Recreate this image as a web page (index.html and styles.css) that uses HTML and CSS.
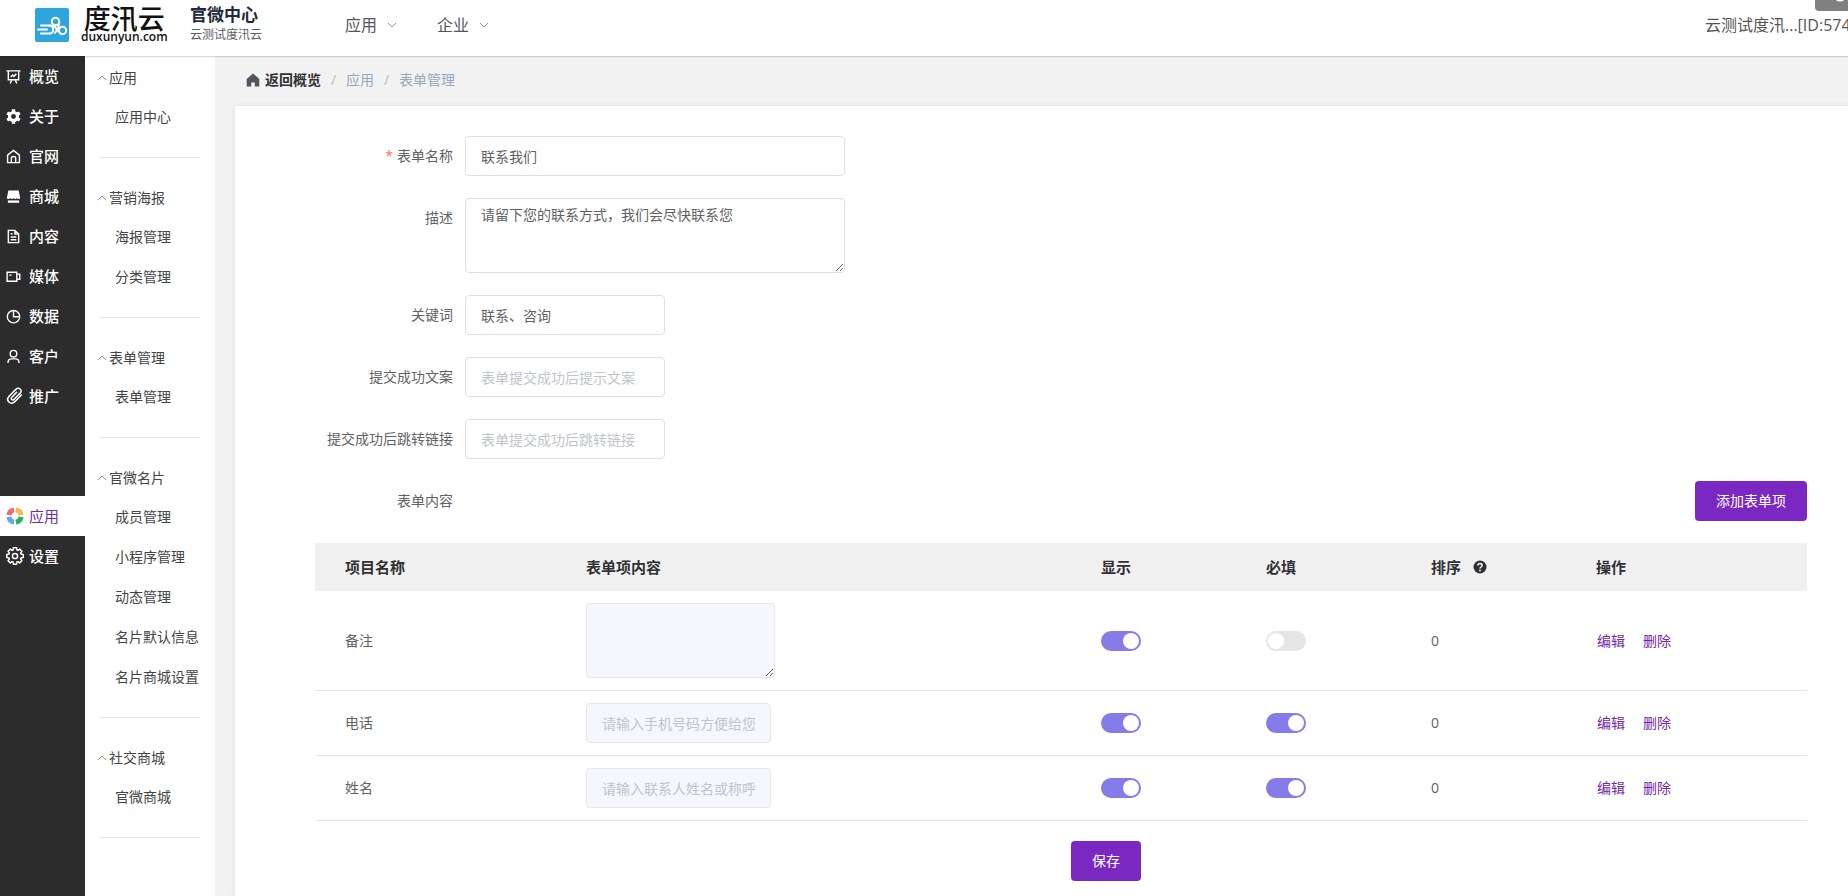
FILE: index.html
```html
<!DOCTYPE html>
<html lang="zh-CN">
<head>
<meta charset="utf-8">
<meta name="viewport" content="width=device-width, initial-scale=1">
<title>表单管理 - 官微中心</title>
<link rel="stylesheet" href="styles.css">
</head>
<body>
<div class="app">
  <header class="topbar">
    <a class="brand" href="#">
      <svg class="brand-mark" viewBox="0 0 34 34" aria-hidden="true">
        <rect width="34" height="34" rx="2" fill="#2fa5dd"/>
        <g fill="none" stroke="#fff" stroke-width="2" stroke-linecap="round" stroke-linejoin="round">
          <path d="M6 17.500h8.500M3 21.500h9M6 25.500h9"/>
          <path d="M14.500 17.500c4.500 0 5 8 .5 8"/>
          <circle cx="20.500" cy="13.500" r="3.700"/>
          <circle cx="27.500" cy="22.500" r="3.700"/>
          <path d="M24.200 14.500c0 4-1.700 7-4.200 10.500M17.500 16l7.500 9"/>
        </g>
      </svg>
      <span class="brand-text">
        <span class="brand-name">度汛云</span>
        <span class="brand-domain">duxunyun.com</span>
      </span>
    </a>
    <div class="site">
      <strong class="site-title">官微中心</strong>
      <span class="site-sub">云测试度汛云</span>
    </div>
    <nav class="topnav" aria-label="主导航">
      <button class="topnav-item" type="button">应用<svg class="caret" viewBox="0 0 10 6" aria-hidden="true"><path d="M1 1l4 4 4-4"/></svg></button>
      <button class="topnav-item" type="button">企业<svg class="caret" viewBox="0 0 10 6" aria-hidden="true"><path d="M1 1l4 4 4-4"/></svg></button>
    </nav>
    <div class="account">云测试度汛...[ID:574]</div>
    <div class="corner-tab" aria-hidden="true"></div>
  </header>

  <nav class="rail" aria-label="功能">
    <a class="rail-item" href="#"><span class="rail-icon"><svg viewBox="0 0 16 16"><path d="M.5 2h15M2.500 2v9.500h11V2M6 12l-1.500 3.500M10 12l1.500 3.500M5 8.500l2-2 1.500 1.500 2.500-3"/></svg></span>概览</a>
    <a class="rail-item" href="#"><span class="rail-icon"><svg viewBox="0 0 16 16"><circle cx="8" cy="8" r="4.300" stroke-width="3.400"/><path d="M8 .3v3M8 12.700v3M1.300 4.150l2.600 1.500M12.100 10.350l2.600 1.500M1.300 11.850l2.600-1.500M12.100 5.650l2.600-1.500" stroke-width="3.600"/></svg></span>关于</a>
    <a class="rail-item" href="#"><span class="rail-icon"><svg viewBox="0 0 16 16"><path d="M1.700 6.500L8 1.500l6.300 5V14.500H1.700zM5.700 14.500V9.500Q5.700 8 8 8t2.300 1.500v5"/></svg></span>官网</a>
    <a class="rail-item" href="#"><span class="rail-icon"><svg viewBox="0 0 16 16"><path d="M2.500 1.500h11L15 9c0 2-2.300 2-3.500.9-1.200 1.100-2.300 1.100-3.500 0-1.200 1.100-2.300 1.100-3.500 0C3.300 11 1 11 1 9z" fill="currentColor" stroke="none"/><path d="M2 12.200h12v2.500H2z" fill="currentColor" stroke="none"/></svg></span>商城</a>
    <a class="rail-item" href="#"><span class="rail-icon"><svg viewBox="0 0 16 16"><path d="M2.500 1.500h7l4 4v9h-11zM9.500 1.500v4h4M5 5h2M5 8.500h6M5 11.500h6"/></svg></span>内容</a>
    <a class="rail-item" href="#"><span class="rail-icon"><svg viewBox="0 0 16 16"><path d="M1.200 3.500h10.300v9.500H1.200zM11.500 5.500h3.200v5.500h-3.200M3.500 6.500h2.500"/></svg></span>媒体</a>
    <a class="rail-item" href="#"><span class="rail-icon"><svg viewBox="0 0 16 16"><circle cx="8" cy="8.200" r="6.600"/><path d="M8 1.600v6.600h6.600"/></svg></span>数据</a>
    <a class="rail-item" href="#"><span class="rail-icon"><svg viewBox="0 0 16 16"><circle cx="8" cy="5" r="3.500"/><path d="M2.200 15v-1c0-2.500 1.800-3.500 3.800-3.500h4c2 0 3.800 1 3.800 3.500v1"/></svg></span>客户</a>
    <a class="rail-item" href="#"><span class="rail-icon"><svg class="rail-svg-lg" viewBox="0 0 18 18"><path d="M15.800 7.500l-6.700 6.900c-4.500 4.300-10-.9-5.800-5.400l6.500-6.600c3.200-3 7 .8 4.100 4L8 12.400c-1.700 1.600-3.800-.5-2.200-2.200l5.200-5.300"/></svg></span>推广</a>
    <a class="rail-item rail-item-active" href="#" aria-current="page"><span class="rail-icon"><svg class="rail-svg-lg" viewBox="0 0 18 18"><g stroke-width="5" fill="none"><path d="M2.900 8.100A6.200 6.200 0 0 1 8.100 2.900" stroke="#ee6b70"/><path d="M9.900 2.900A6.200 6.200 0 0 1 15.100 8.100" stroke="#f8b94b"/><path d="M15.100 9.900A6.200 6.200 0 0 1 9.900 15.100" stroke="#27b35a"/><path d="M8.100 15.100A6.200 6.200 0 0 1 2.900 9.900" stroke="#5ea7f5"/></g></svg></span>应用</a>
    <a class="rail-item" href="#"><span class="rail-icon"><svg class="rail-svg-lg" viewBox="0 0 18 18"><path stroke-linejoin="round" d="M7.100 3L7.400.8h3.200l.3 2.200 1 .4 1.800-1.300 2.200 2.200-1.300 1.800.4 1 2.200.3v3.200l-2.200.3-.4 1 1.300 1.800-2.200 2.200-1.800-1.300-1 .4-.3 2.200H7.400L7.100 15l-1-.4-1.800 1.300-2.200-2.200 1.300-1.800-.4-1-2.200-.3V7.400L3 7.100l.4-1L2.100 4.300l2.200-2.200 1.800 1.300z"/><circle cx="9" cy="9" r="2.600"/></svg></span>设置</a>
  </nav>

  <nav class="submenu" aria-label="应用菜单">
    <section class="group">
      <button class="group-title" type="button"><svg class="group-caret" viewBox="0 0 10 6" aria-hidden="true"><path d="M1 5l4-4 4 4"/></svg>应用</button>
      <a class="group-link" href="#">应用中心</a>
    </section>
    <section class="group">
      <button class="group-title" type="button"><svg class="group-caret" viewBox="0 0 10 6" aria-hidden="true"><path d="M1 5l4-4 4 4"/></svg>营销海报</button>
      <a class="group-link" href="#">海报管理</a>
      <a class="group-link" href="#">分类管理</a>
    </section>
    <section class="group">
      <button class="group-title" type="button"><svg class="group-caret" viewBox="0 0 10 6" aria-hidden="true"><path d="M1 5l4-4 4 4"/></svg>表单管理</button>
      <a class="group-link" href="#">表单管理</a>
    </section>
    <section class="group">
      <button class="group-title" type="button"><svg class="group-caret" viewBox="0 0 10 6" aria-hidden="true"><path d="M1 5l4-4 4 4"/></svg>官微名片</button>
      <a class="group-link" href="#">成员管理</a>
      <a class="group-link" href="#">小程序管理</a>
      <a class="group-link" href="#">动态管理</a>
      <a class="group-link" href="#">名片默认信息</a>
      <a class="group-link" href="#">名片商城设置</a>
    </section>
    <section class="group">
      <button class="group-title" type="button"><svg class="group-caret" viewBox="0 0 10 6" aria-hidden="true"><path d="M1 5l4-4 4 4"/></svg>社交商城</button>
      <a class="group-link" href="#">官微商城</a>
    </section>
  </nav>

  <main class="main">
    <nav class="crumbs" aria-label="面包屑">
      <a class="crumb crumb-home" href="#"><svg class="home-icon" viewBox="0 0 14 14" aria-hidden="true"><path d="M7 .5L13.300 6v7.500H8.800V9.500H5.200v4H.7V6z" fill="#51555c"/></svg>返回概览</a>
      <span class="crumb-sep">/</span>
      <a class="crumb" href="#">应用</a>
      <span class="crumb-sep">/</span>
      <a class="crumb" href="#">表单管理</a>
    </nav>
    <form class="card">
      <div class="field">
        <label class="label label-required" for="f-name">表单名称</label>
        <input class="control control-wide" id="f-name" type="text" value="联系我们">
      </div>
      <div class="field">
        <label class="label" for="f-desc">描述</label>
        <textarea class="control control-wide control-area" id="f-desc">请留下您的联系方式，我们会尽快联系您</textarea>
      </div>
      <div class="field">
        <label class="label" for="f-keys">关键词</label>
        <input class="control" id="f-keys" type="text" value="联系、咨询">
      </div>
      <div class="field">
        <label class="label" for="f-ok">提交成功文案</label>
        <input class="control" id="f-ok" type="text" placeholder="表单提交成功后提示文案">
      </div>
      <div class="field">
        <label class="label" for="f-url">提交成功后跳转链接</label>
        <input class="control" id="f-url" type="text" placeholder="表单提交成功后跳转链接">
      </div>
      <div class="field">
        <span class="label">表单内容</span>
        <button class="btn btn-add" type="button">添加表单项</button>
      </div>

      <table class="items">
        <colgroup>
          <col class="col-side"><col><col class="col-flag"><col class="col-flag"><col class="col-flag"><col class="col-side">
        </colgroup>
        <thead>
          <tr>
            <th scope="col">项目名称</th>
            <th scope="col">表单项内容</th>
            <th scope="col">显示</th>
            <th scope="col">必填</th>
            <th scope="col"><span class="sort-head">排序<svg class="help" viewBox="0 0 14 14" role="img" aria-label="帮助"><circle cx="7" cy="7" r="6.500" fill="#2d2f33"/><path d="M4.900 5.500c0-2.600 4.200-2.600 4.200 0 0 1.500-2.100 1.500-2.100 3" fill="none" stroke="#fff" stroke-width="1.500"/><circle cx="7" cy="10.500" r=".9" fill="#fff"/></svg></span></th>
            <th scope="col">操作</th>
          </tr>
        </thead>
        <tbody>
          <tr>
            <td>备注</td>
            <td><textarea class="control control-area control-preview-area" aria-label="备注" readonly></textarea></td>
            <td><input class="switch" type="checkbox" aria-label="备注 显示" checked></td>
            <td><input class="switch" type="checkbox" aria-label="备注 必填"></td>
            <td>0</td>
            <td><div class="ops"><button class="link" type="button">编辑</button><button class="link" type="button">删除</button></div></td>
          </tr>
          <tr>
            <td>电话</td>
            <td><input class="control control-preview" type="text" aria-label="电话" placeholder="请输入手机号码方便给您" readonly></td>
            <td><input class="switch" type="checkbox" aria-label="电话 显示" checked></td>
            <td><input class="switch" type="checkbox" aria-label="电话 必填" checked></td>
            <td>0</td>
            <td><div class="ops"><button class="link" type="button">编辑</button><button class="link" type="button">删除</button></div></td>
          </tr>
          <tr>
            <td>姓名</td>
            <td><input class="control control-preview" type="text" aria-label="姓名" placeholder="请输入联系人姓名或称呼" readonly></td>
            <td><input class="switch" type="checkbox" aria-label="姓名 显示" checked></td>
            <td><input class="switch" type="checkbox" aria-label="姓名 必填" checked></td>
            <td>0</td>
            <td><div class="ops"><button class="link" type="button">编辑</button><button class="link" type="button">删除</button></div></td>
          </tr>
        </tbody>
      </table>

      <div class="actions"><button class="btn" type="button">保存</button></div>
    </form>
  </main>
</div>
</body>
</html>
```
FILE: styles.css
```css
*,
*::before,
*::after {
  box-sizing: border-box;
}

body {
  margin: 0;
  overflow: hidden;
  font-family: "Open Sans", "Noto Sans CJK SC", sans-serif;
  font-size: 14px;
  line-height: 20px;
  color: #606266;
  background: #f2f2f2;
}

a {
  color: inherit;
  text-decoration: none;
}

button,
input,
textarea {
  font: inherit;
  color: inherit;
}

button {
  padding: 0;
  border: 0;
  background: none;
  cursor: pointer;
}

.app {
  display: grid;
  grid-template-columns: 85px 130px minmax(0, 1fr);
  grid-template-rows: 56px 1fr;
  height: 100vh;
}

/* Top bar */
.topbar {
  position: relative;
  z-index: 1;
  grid-column: 1 / -1;
  display: flex;
  align-items: center;
  padding-left: 35px;
  padding-bottom: 6px;
  background: #fff;
  box-shadow: 0 1px 1px rgba(0, 0, 0, 0.14);
}

.brand {
  display: flex;
  align-items: center;
  gap: 12px;
  width: 155px;
  color: #111;
}

.brand-mark {
  width: 34px;
  height: 34px;
}

.brand-text {
  display: flex;
  flex-direction: column;
  align-items: center;
}

.brand-name {
  font-size: 27px;
  font-weight: 500;
  line-height: 24px;
}

.brand-domain {
  font-size: 12px;
  font-weight: 600;
  line-height: 12px;
}

.site {
  display: flex;
  flex-direction: column;
  width: 155px;
}

.site-title {
  font-size: 17px;
  line-height: 20px;
  color: #1f2a3c;
}

.site-sub {
  font-size: 12px;
  line-height: 20px;
  color: #5c5c66;
}

.topnav {
  display: flex;
  gap: 40px;
}

.topnav-item {
  display: flex;
  align-items: center;
  gap: 10px;
  font-size: 16px;
  color: #55555e;
}

.caret {
  width: 10px;
  height: 6px;
  fill: none;
  stroke: #909399;
}

.account {
  flex: none;
  width: 143px;
  margin-left: auto;
  overflow: hidden;
  font-size: 16px;
  white-space: nowrap;
  color: #555;
}

.corner-tab {
  position: absolute;
  top: 0;
  right: 0;
  width: 33px;
  height: 11px;
  border-bottom-left-radius: 4px;
  background: radial-gradient(circle at 25px -5px, #fff 6px, #808080 7px);
}

/* Dark rail */
.rail {
  background: #2c2c2c;
}

.rail-item {
  display: flex;
  align-items: center;
  gap: 5px;
  height: 40px;
  padding-left: 6px;
  font-size: 15px;
  font-weight: 500;
  color: #fff;
}

.rail-item-active {
  margin-top: 80px;
  font-weight: 400;
  color: #6b2fa5;
  background: #fff;
}

.rail-icon {
  display: flex;
  width: 18px;
}

.rail-icon svg {
  width: 15px;
  height: 15px;
  fill: none;
  stroke: currentColor;
  stroke-width: 1.5;
}

.rail-icon .rail-svg-lg {
  width: 18px;
  height: 18px;
}

/* Second-level menu */
.submenu {
  padding-top: 1px;
  background: #fff;
  color: #444;
}

.group {
  padding-bottom: 40px;
  background: linear-gradient(#e6e6e6, #e6e6e6) 15px calc(100% - 19px) / 100px 1px no-repeat;
}

.group-title {
  display: flex;
  align-items: center;
  gap: 2px;
  width: 100%;
  height: 40px;
  padding: 2px 0 0 12px;
}

.group-caret {
  width: 10px;
  height: 6px;
  fill: none;
  stroke: #909399;
}

.group-link {
  display: flex;
  align-items: center;
  height: 40px;
  padding-left: 30px;
  white-space: nowrap;
}

/* Content */
.main {
  display: flex;
  flex-direction: column;
  padding-left: 20px;
}

.crumbs {
  display: flex;
  align-items: center;
  height: 50px;
  padding: 0 0 2px 11px;
  color: #97a8be;
}

.crumb-home {
  display: flex;
  align-items: center;
  gap: 5px;
  font-weight: 700;
  color: #303133;
}

.home-icon {
  width: 14px;
  height: 14px;
}

.crumb-sep {
  width: 25px;
  text-align: center;
  color: #b4b8c0;
}

.card {
  flex: 1;
  padding: 30px 41px 15px 80px;
  background: #fff;
  box-shadow: 0 0 6px rgba(0, 0, 0, 0.08);
}

.field {
  display: flex;
  align-items: flex-start;
  margin-bottom: 22px;
}

.label {
  width: 150px;
  padding-right: 12px;
  line-height: 40px;
  text-align: right;
}

.label-required::before {
  content: "*";
  margin-right: 4px;
  color: #f56c6c;
}

.control {
  display: block;
  width: 200px;
  height: 40px;
  padding: 0 15px;
  border: 1px solid #dcdfe6;
  border-radius: 4px;
  outline: none;
  background: #fff;
}

.control::placeholder {
  color: #c0c4cc;
}

.control-wide {
  width: 380px;
}

.control-area {
  height: 75px;
  padding: 5px 15px;
  line-height: 21px;
  resize: vertical;
}

.control-preview,
.control-preview-area {
  border-color: #e4e7ed;
  background: #f5f7fc;
}

.control-preview {
  width: 185px;
}

.control-preview-area {
  width: 189px;
}

.btn {
  height: 40px;
  padding: 0 21px;
  border-radius: 4px;
  color: #fff;
  background: #7b27c1;
}

.btn-add {
  margin-left: auto;
}

/* Form item table */
.items {
  width: 100%;
  table-layout: fixed;
  border-collapse: separate;
  border-spacing: 0;
}

.col-side {
  width: 241px;
}

.col-flag {
  width: 165px;
}

.items th,
.items td {
  padding: 12px 0 12px 30px;
  text-align: left;
  vertical-align: middle;
}

.items th {
  height: 48px;
  font-size: 15px;
  font-weight: 700;
  color: #303133;
  background: #f0f0f0;
}

.items td {
  border-bottom: 1px solid #e6e6e8;
}

.sort-head {
  display: flex;
  align-items: center;
  gap: 12px;
}

.help {
  width: 14px;
  height: 14px;
}

.switch {
  display: block;
  width: 40px;
  height: 20px;
  margin: 0;
  padding: 2px;
  appearance: none;
  border-radius: 10px;
  background: #e6e6e6;
  cursor: pointer;
}

.switch::before {
  content: "";
  display: block;
  width: 16px;
  height: 16px;
  border-radius: 50%;
  background: #fff;
}

.switch:checked {
  background: #857be9;
}

.switch:checked::before {
  margin-left: auto;
}

.ops {
  display: flex;
  gap: 18px;
  padding-left: 1px;
}

.link {
  color: #7427a8;
}

.actions {
  display: flex;
  justify-content: center;
  padding: 20px 0 0 90px;
}
```
